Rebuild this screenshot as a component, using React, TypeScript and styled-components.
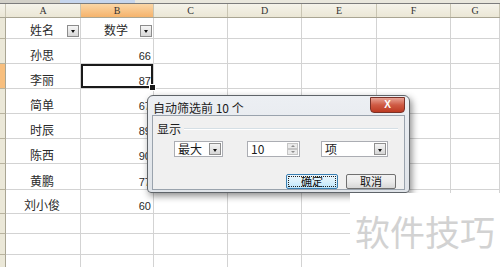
import styled, { createGlobalStyle, css } from "styled-components";

const GlobalStyle = createGlobalStyle`
  html, body {
    margin: 0;
    padding: 0;
    background: #ffffff;
    overflow: hidden;
  }
  body {
    font-family: "Noto Sans CJK SC", "Noto Sans", sans-serif;
  }
`;

const COLS = "6px 75px 73px 74px 74px 75px 74px 1fr";
const CJK = `"Noto Sans CJK SC", "Noto Sans", sans-serif`;

const rows = [
  { h: 21, name: "姓名", score: "数学", head: true },
  { h: 25, name: "孙思", score: "66" },
  { h: 25, name: "李丽", score: "87", selected: true },
  { h: 25, name: "简单", score: "67" },
  { h: 25, name: "时辰", score: "89" },
  { h: 25, name: "陈西", score: "90" },
  { h: 26, name: "黄鹏", score: "77" },
  { h: 24, name: "刘小俊", score: "60" },
  { h: 20 },
  { h: 21 },
  { h: 20 },
];

const Page = styled.div`
  position: relative;
  width: 500px;
  height: 267px;
  overflow: hidden;
  background: #fff;
`;

const TopStrip = styled.div`
  display: grid;
  grid-template-columns: 60px 75px 1fr;
  height: 3px;
  border-bottom: 1px solid #7c7c7c;
`;

const StripPart = styled.div<{ $tone: string }>`
  background: ${(p) => p.$tone};
`;

const HeaderRow = styled.div`
  display: grid;
  grid-template-columns: ${COLS};
  height: 13px;
  border-bottom: 1px solid #a9a593;
`;

const ColHead = styled.div<{ $active?: boolean }>`
  box-sizing: border-box;
  display: flex;
  align-items: center;
  justify-content: center;
  border-right: 1px solid #c9c5b3;
  font-family: "Liberation Serif", serif;
  font-size: 10px;
  color: #333;
  background: ${(p) =>
    p.$active
      ? "linear-gradient(#fbd6a6, #f5b36b)"
      : "linear-gradient(#f5f3ea, #ebe7d6)"};
`;

const Row = styled.div<{ $h: number }>`
  display: grid;
  grid-template-columns: ${COLS};
  height: ${(p) => p.$h}px;
`;

const RowHead = styled.div<{ $active?: boolean }>`
  border-bottom: 1px solid #b8b39e;
  border-right: 1px solid #a9a593;
  background: ${(p) => (p.$active ? "#f8bf7e" : "#ebe8d8")};
`;

const Cell = styled.div<{ $align?: "center" | "right"; $selected?: boolean }>`
  position: relative;
  box-sizing: border-box;
  display: flex;
  align-items: flex-end;
  justify-content: ${(p) => (p.$align === "right" ? "flex-end" : "center")};
  padding: 0 2px 0 0;
  border-right: 1px solid #d3d3d3;
  border-bottom: 1px solid #d3d3d3;
  color: #2a2a2a;
  ${(p) =>
    p.$selected &&
    css`
      box-shadow: inset 0 0 0 2px #1a1a1a;
      &::after {
        content: "";
        position: absolute;
        right: -3px;
        bottom: -3px;
        width: 5px;
        height: 5px;
        background: #1a1a1a;
        border: 1px solid #fff;
        z-index: 2;
      }
    `}
`;

const NameText = styled.span`
  font-family: ${CJK};
  font-size: 12px;
  line-height: 16px;
  color: #2a2a2a;
`;

const Num = styled.span`
  font-family: "Liberation Sans", Arial, sans-serif;
  font-size: 11px;
  line-height: 14px;
  color: #2a2a2a;
`;

const FilterBtn = styled.span`
  position: absolute;
  right: 1px;
  bottom: 1px;
  width: 10px;
  height: 10px;
  border: 1px solid #8c8c8c;
  background: linear-gradient(#f6f6f6, #d8d8d8);
  &::after {
    content: "";
    position: absolute;
    left: 3px;
    top: 4px;
    border-left: 2px solid transparent;
    border-right: 2px solid transparent;
    border-top: 3px solid #111;
  }
`;

/* dialog */

const Dialog = styled.div`
  position: absolute;
  left: 147px;
  top: 95px;
  width: 263px;
  height: 98px;
  box-sizing: border-box;
  border: 1px solid #5f6469;
  border-radius: 6px 6px 4px 4px;
  background: linear-gradient(#eceff3, #dfe3e8);
  box-shadow: 2px 3px 7px rgba(0, 0, 0, 0.45);
  display: flex;
  flex-direction: column;
  padding: 0 4px 3px 4px;
  font-family: ${CJK};
  color: #1c1c1c;
`;

const TitleBar = styled.div`
  height: 21px;
  display: flex;
  align-items: flex-start;
  justify-content: space-between;
`;

const Title = styled.span`
  font-size: 12px;
  line-height: 14px;
  margin: 5px 0 0 1px;
`;

const CloseBtn = styled.span`
  width: 33px;
  height: 14px;
  margin-top: 1px;
  border: 1px solid #7a3228;
  border-radius: 0 0 4px 4px;
  background: linear-gradient(#e8a496, #cf5a44 50%, #bc3a22);
  color: #fff;
  font-family: "Liberation Sans", Arial, sans-serif;
  font-weight: bold;
  font-size: 10px;
  line-height: 14px;
  text-align: center;
`;

const Panel = styled.div`
  flex: 1;
  border: 1px solid #9aa3ad;
  background: #f0f0f0;
  display: flex;
  flex-direction: column;
  padding: 5px 6px 0 4px;
`;

const Group = styled.div`
  display: flex;
  align-items: center;
  gap: 3px;
  height: 14px;
  font-size: 12px;
`;

const GroupLine = styled.span`
  flex: 1;
  height: 0;
  border-top: 1px solid #d5dfe5;
  border-bottom: 1px solid #fff;
  margin-top: 1px;
`;

const Controls = styled.div`
  display: flex;
  align-items: center;
  margin: 6px 0 0 17px;
  height: 16px;
`;

const Field = styled.div<{ $w: number; $gap?: number }>`
  position: relative;
  box-sizing: border-box;
  width: ${(p) => p.$w}px;
  height: 16px;
  margin-left: ${(p) => p.$gap ?? 0}px;
  border: 1px solid #abadb3;
  background: #fff;
  display: flex;
  align-items: center;
  padding-left: 3px;
  font-size: 12px;
  line-height: 14px;
`;

const DropBtn = styled.span`
  position: absolute;
  right: 1px;
  top: 1px;
  bottom: 1px;
  width: 12px;
  border: 1px solid #8f8f8f;
  box-sizing: border-box;
  background: linear-gradient(#f4f4f4, #d6d6d6);
  &::after {
    content: "";
    position: absolute;
    left: 3px;
    top: 5px;
    border-left: 2px solid transparent;
    border-right: 2px solid transparent;
    border-top: 3px solid #111;
  }
`;

const Spin = styled.span`
  position: absolute;
  right: 1px;
  top: 1px;
  bottom: 1px;
  width: 11px;
  display: flex;
  flex-direction: column;
  &::before,
  &::after {
    content: "";
    flex: 1;
    border: 1px solid #c5c5c5;
    background: #eaeaea;
  }
`;

const SpinMark = styled.span<{ $up?: boolean }>`
  position: absolute;
  right: 4px;
  ${(p) => (p.$up ? "top: 3px;" : "bottom: 3px;")}
  border-left: 2px solid transparent;
  border-right: 2px solid transparent;
  ${(p) =>
    p.$up ? "border-bottom: 2px solid #8c8c8c;" : "border-top: 2px solid #8c8c8c;"}
  z-index: 1;
`;

const Buttons = styled.div`
  display: flex;
  justify-content: flex-end;
  gap: 8px;
  margin-top: 17px;
  margin-right: 2px;
`;

const Button = styled.button<{ $focused?: boolean }>`
  position: relative;
  box-sizing: border-box;
  height: 15px;
  padding: 0;
  border-radius: 2px;
  font-family: ${CJK};
  font-size: 11px;
  line-height: 13px;
  color: #111;
  width: ${(p) => (p.$focused ? 52 : 50)}px;
  border: 1px solid ${(p) => (p.$focused ? "#3c7fb1" : "#707070")};
  background: ${(p) =>
    p.$focused
      ? "linear-gradient(#eaf6fd, #d9f0fc 50%, #bee6fd)"
      : "linear-gradient(#f2f2f2, #ebebeb 50%, #d7d7d7)"};
  ${(p) =>
    p.$focused &&
    css`
      &::before {
        content: "";
        position: absolute;
        inset: 1px;
        border: 1px dotted #222;
      }
    `}
`;

const Watermark = styled.div`
  position: absolute;
  left: 350px;
  top: 193px;
  right: 0;
  bottom: 0;
  background: #fff;
  display: flex;
  align-items: center;
  padding-left: 5px;
  font-family: ${CJK};
  font-size: 35px;
  color: #d2d2d2;
`;

const letters = ["A", "B", "C", "D", "E", "F", "G"];

export default function App() {
  return (
    <>
      <GlobalStyle />
      <Page>
        <TopStrip>
          <StripPart $tone="#d2d0c8" />
          <StripPart $tone="#c6d6ee" />
          <StripPart $tone="#e9e7dd" />
        </TopStrip>
        <HeaderRow>
          <ColHead />
          {letters.map((l) => (
            <ColHead key={l} $active={l === "B"}>
              {l}
            </ColHead>
          ))}
        </HeaderRow>
        {rows.map((r, i) => (
          <Row key={i} $h={r.h}>
            <RowHead $active={r.selected} />
            <Cell>
              {r.name && <NameText>{r.name}</NameText>}
              {r.head && <FilterBtn />}
            </Cell>
            <Cell $align={r.head ? "center" : "right"} $selected={r.selected}>
              {r.head ? (
                <NameText>{r.score}</NameText>
              ) : (
                r.score && <Num>{r.score}</Num>
              )}
              {r.head && <FilterBtn />}
            </Cell>
            <Cell />
            <Cell />
            <Cell />
            <Cell />
            <Cell />
          </Row>
        ))}

        <Dialog>
          <TitleBar>
            <Title>自动筛选前 10 个</Title>
            <CloseBtn>X</CloseBtn>
          </TitleBar>
          <Panel>
            <Group>
              显示
              <GroupLine />
            </Group>
            <Controls>
              <Field $w={49}>
                最大
                <DropBtn />
              </Field>
              <Field $w={53} $gap={24}>
                10
                <Spin />
                <SpinMark $up />
                <SpinMark />
              </Field>
              <Field $w={67} $gap={21}>
                项
                <DropBtn />
              </Field>
            </Controls>
            <Buttons>
              <Button $focused>确定</Button>
              <Button>取消</Button>
            </Buttons>
          </Panel>
        </Dialog>

        <Watermark>软件技巧</Watermark>
      </Page>
    </>
  );
}
